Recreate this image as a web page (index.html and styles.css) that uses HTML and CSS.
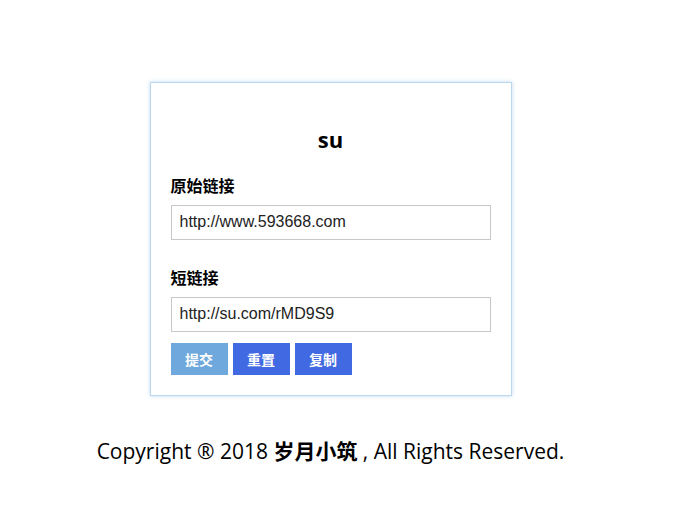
FILE: index.html
```html
<!DOCTYPE html>
<html lang="zh">
<head>
<meta charset="utf-8">
<title>su</title>
<link rel="stylesheet" href="styles.css">
</head>
<body>
<div class="page">
  <div class="card">
    <h1 class="title">su</h1>
    <label class="label">原始链接</label>
    <div class="input">http://www.593668.com</div>
    <label class="label label-second">短链接</label>
    <div class="input">http://su.com/rMD9S9</div>
    <div class="buttons">
      <span class="btn btn-light">提交</span>
      <span class="btn">重置</span>
      <span class="btn">复制</span>
    </div>
  </div>
  <p class="footer">Copyright ® 2018 <b>岁月小筑</b> , All Rights Reserved.</p>
</div>
</body>
</html>
```

FILE: styles.css
```css
html, body {
  margin: 0;
  padding: 0;
  background: #fff;
}
.page {
  width: 661px;
  padding-top: 82px;
  font-family: "Open Sans", "Noto Sans", "Noto Sans CJK SC", sans-serif;
  color: #000;
}
.card {
  box-sizing: border-box;
  width: 362px;
  height: 314px;
  margin: 0 auto;
  border: 1px solid #b9d7ee;
  box-shadow: 0 0 4px rgba(120, 170, 220, 0.45);
  padding: 0 20px;
  display: flex;
  flex-direction: column;
}
.title {
  margin: 37px 0 0;
  height: 38px;
  font-size: 22px;
  font-weight: 700;
  line-height: 38px;
  text-align: center;
}
.label {
  display: block;
  margin: 0 0 9px;
  height: 22px;
  line-height: 22px;
  font-size: 16px;
  font-weight: 700;
  font-family: "Noto Sans CJK SC", sans-serif;
}
.title + .label {
  margin-top: 16px;
}
.label-second {
  margin-top: 26px;
}
.input {
  box-sizing: border-box;
  width: 320px;
  height: 35px;
  border: 1px solid #c8c8c8;
  padding: 0 8px;
  line-height: 31px;
  font-family: "Liberation Sans", Arial, sans-serif;
  font-size: 16px;
  color: #222;
}
.buttons {
  display: flex;
  gap: 5px;
  margin-top: 11px;
}
.btn {
  width: 57px;
  height: 32px;
  line-height: 32px;
  text-align: center;
  background: #4169e1;
  color: #fff;
  font-family: "Noto Sans CJK SC", sans-serif;
  font-size: 14px;
  font-weight: 700;
}
.btn-light {
  background: #6fa8dc;
}
.footer {
  margin: 40px 0 0;
  text-align: center;
  font-size: 21px;
  line-height: 28px;
  font-family: "Open Sans", "Noto Sans CJK SC", sans-serif;
}
.footer b {
  font-family: "Noto Sans CJK SC", sans-serif;
  font-weight: 700;
}
```
